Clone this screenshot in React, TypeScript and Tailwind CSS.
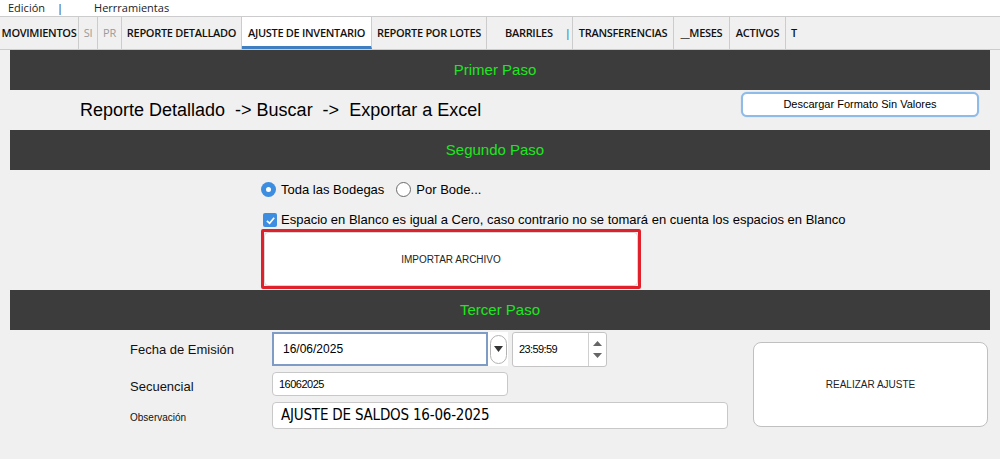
const tabs = [
    { label: "MOVIMIENTOS", w: "w-[79px]", muted: false },
    { label: "SI", w: "w-[19px]", muted: true },
    { label: "PR", w: "w-[24px]", muted: true },
    { label: "REPORTE DETALLADO", w: "w-[120px]", muted: false },
];

const Band = ({ title, shift }: { title: string; shift?: boolean }) => (
    <div
        className={`h-[40px] bg-[#3c3c3c] flex items-center justify-center text-[15px] text-[#1ee61e] font-['Liberation_Sans',sans-serif] ${shift ? "pr-[10px]" : ""}`}
    >
        {title}
    </div>
);

const Radio = ({ checked, label }: { checked?: boolean; label: string }) => (
    <label className="flex items-center gap-[5px]">
        {checked ? (
            <span className="w-[15px] h-[15px] rounded-full bg-[#3d8ee0] flex items-center justify-center">
                <span className="w-[5px] h-[5px] rounded-full bg-white" />
            </span>
        ) : (
            <span className="w-[15px] h-[15px] rounded-full border border-[#6b6b6b] bg-white" />
        )}
        <span>{label}</span>
    </label>
);

export default function App() {
    return (
        <div className="w-[1000px] h-[459px] bg-[#f0f0f0] overflow-hidden font-['Liberation_Sans',sans-serif] text-black">
            {/* menu */}
            <div className="h-[16px] bg-white flex items-center text-[11px] font-['Open_Sans',sans-serif] text-[#222]">
                <span className="ml-[8px]">Edición</span>
                <span className="ml-[12px]">|</span>
                <span className="ml-[31px]">Herrramientas</span>
            </div>

            {/* tabs */}
            <div className="h-[34px] flex border-y border-[#cccccc] bg-[#f0f0f0] text-[11px] font-['Open_Sans',sans-serif] tracking-[-0.3px]">
                {tabs.map((t) => (
                    <div
                        key={t.label}
                        className={`${t.w} shrink-0 flex items-center justify-center border-r border-[#cccccc] ${t.muted ? "text-[#9a9a9a]" : "text-[#111] font-semibold"}`}
                    >
                        {t.label}
                    </div>
                ))}
                <div className="w-[130px] shrink-0 flex items-center justify-center bg-white border-r border-[#cccccc] border-b-[3px] border-b-[#3f7fc1] pt-[3px] text-[#111] font-semibold">
                    AJUSTE DE INVENTARIO
                </div>
                <div className="w-[115px] shrink-0 flex items-center justify-center border-r border-[#cccccc] text-[#111] font-semibold">
                    REPORTE POR LOTES
                </div>
                <div className="w-[86px] shrink-0 flex items-center border-r border-[#cccccc] text-[#111] font-semibold">
                    <span className="ml-[18px]">BARRILES</span>
                    <span className="ml-[12px] text-[#3f7fc1]">|</span>
                </div>
                <div className="w-[101px] shrink-0 flex items-center justify-center border-r border-[#cccccc] text-[#111] font-semibold">
                    TRANSFERENCIAS
                </div>
                <div className="w-[56px] shrink-0 flex items-center justify-center border-r border-[#cccccc] text-[#111] font-semibold">
                    __MESES
                </div>
                <div className="w-[56px] shrink-0 flex items-center justify-center border-r border-[#cccccc] text-[#111] font-semibold">
                    ACTIVOS
                </div>
                <div className="flex items-center pl-[5px] text-[#111] font-semibold">T</div>
            </div>

            <div className="px-[10px]">
                <Band title="Primer Paso" shift />
                <div className="h-[40px] flex items-center justify-between">
                    <div className="ml-[70px] text-[18px] pt-[1px]">
                        Reporte Detallado&nbsp; -&gt; Buscar&nbsp; -&gt;&nbsp; Exportar a Excel
                    </div>
                    <button className="w-[238px] h-[25px] mr-[11px] mb-[12px] rounded-[6px] border-2 border-[#8fbbe8] bg-white text-[11px] shadow-[0_0_1px_#8fbbe8]">
                        Descargar Formato Sin Valores
                    </button>
                </div>

                <Band title="Segundo Paso" shift />
                <div className="h-[120px] pl-[251px] text-[13px]">
                    <div className="flex gap-[12px] pt-[4px] h-[35px]">
                        <Radio checked label="Toda las Bodegas" />
                        <Radio label="Por Bode..." />
                    </div>
                    <div className="flex items-center gap-[4px] h-[18px] pl-[2px] mt-[6px]">
                        <span className="w-[14px] h-[14px] rounded-[2px] bg-[#3d8ee0] flex items-center justify-center">
                            <svg width="11" height="11" viewBox="0 0 12 12">
                                <path d="M2 6.5 L5 9 L10 3" fill="none" stroke="white" strokeWidth="1.8" />
                            </svg>
                        </span>
                        <span>Espacio en Blanco es igual a Cero, caso contrario no se tomará en cuenta los espacios en Blanco</span>
                    </div>
                    <div className="w-[380px] h-[60px] border-[3px] border-[#e0202a] rounded-[2px]">
                        <button className="w-full h-full bg-white rounded-[4px] border border-[#d6d6d6] text-[10px] text-[#222]">
                            IMPORTAR ARCHIVO
                        </button>
                    </div>
                </div>

                <Band title="Tercer Paso" />
                <div className="flex pt-[2px]">
                    <div className="w-[262px] pl-[120px] text-[13px] text-[#111]">
                        <div className="h-[36px] flex items-center">Fecha de Emisión</div>
                        <div className="h-[34px] flex items-center pt-[4px]">Secuencial</div>
                        <div className="h-[30px] flex items-center text-[10px]">Observación</div>
                    </div>
                    <div className="w-[480px]">
                        <div className="flex h-[36px] items-start">
                            <div className="w-[216px] h-[34px] border-2 border-[#7f9dc4] bg-white flex items-center pl-[9px] text-[12px]">
                                16/06/2025
                            </div>
                            <div className="w-[20px] h-[34px] bg-white flex items-center justify-center">
                                <div className="w-[17px] h-[29px] rounded-full border border-[#b3b3b3] flex items-center justify-center">
                                    <svg width="9" height="6" viewBox="0 0 9 6">
                                        <path d="M0 0 H9 L4.5 6 Z" fill="#333" />
                                    </svg>
                                </div>
                            </div>
                            <div className="ml-[4px] w-[95px] h-[35px] border border-[#c4c4c4] rounded-[3px] bg-white flex">
                                <div className="flex-1 flex items-center pl-[6px] text-[11px] tracking-[-0.6px]">23:59:59</div>
                                <div className="w-[18px] border-l border-[#d0d0d0] flex flex-col items-center justify-center gap-[7px]">
                                    <svg width="9" height="5" viewBox="0 0 9 5"><path d="M0 5 H9 L4.5 0 Z" fill="#666" /></svg>
                                    <svg width="9" height="5" viewBox="0 0 9 5"><path d="M0 0 H9 L4.5 5 Z" fill="#666" /></svg>
                                </div>
                            </div>
                        </div>
                        <div className="h-[34px] pt-[4px]">
                            <div className="w-[236px] h-[24px] border border-[#c8c8c8] rounded-[4px] bg-white flex items-center pl-[6px] text-[11px] tracking-[-0.5px]">
                                16062025
                            </div>
                        </div>
                        <div className="w-[456px] h-[27px] border border-[#c8c8c8] rounded-[4px] bg-white flex items-center pl-[8px] text-[15px] font-['DejaVu_Sans_Condensed','DejaVu_Sans',sans-serif] tracking-[-0.2px]">
                            AJUSTE DE SALDOS 16-06-2025
                        </div>
                    </div>
                    <div className="ml-[1px] mt-[10px]">
                        <button className="w-[235px] h-[85px] rounded-[8px] border border-[#c0c0c0] bg-white text-[10px] text-[#222]">
                            REALIZAR AJUSTE
                        </button>
                    </div>
                </div>
            </div>
        </div>
    );
}
